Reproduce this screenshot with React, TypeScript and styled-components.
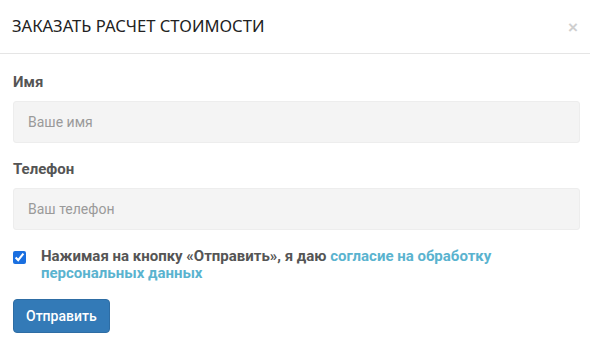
import styled, { createGlobalStyle } from 'styled-components'

const GlobalStyle = createGlobalStyle`
  html, body {
    margin: 0;
    padding: 0;
    background: #ffffff;
  }
  * {
    box-sizing: border-box;
  }
`

/**
 * Order cost calculation modal
 */
export default function App() {
  return (
    <>
      <GlobalStyle />
      <Modal>
        <Header>
          <Title>Заказать расчет стоимости</Title>
          <Close aria-label="Закрыть">×</Close>
        </Header>
        <Body>
          <Field>
            <Label htmlFor="name">Имя</Label>
            <Input id="name" placeholder="Ваше имя" />
          </Field>
          <Field>
            <Label htmlFor="phone">Телефон</Label>
            <Input id="phone" placeholder="Ваш телефон" />
          </Field>
          <Agree>
            <Checkbox type="checkbox" defaultChecked />
            <AgreeText>
              Нажимая на кнопку «Отправить», я даю{' '}
              <AgreeLink href="#">согласие на обработку персональных данных</AgreeLink>
            </AgreeText>
          </Agree>
          <Submit type="button">Отправить</Submit>
        </Body>
      </Modal>
    </>
  )
}

// Styled components
const Modal = styled.div`
  width: 590px;
  height: 342px;
  background: #ffffff;
  display: flex;
  flex-direction: column;
`

const Header = styled.div`
  height: 54px;
  padding: 0 12px 0 12px;
  display: flex;
  align-items: center;
  justify-content: space-between;
  border-bottom: 1px solid #e5e5e5;
`

const Title = styled.h4`
  margin: 0;
  font-family: 'Noto Sans', sans-serif;
  font-size: 16.6px;
  font-weight: 400;
  text-transform: uppercase;
  color: #222222;
  padding-bottom: 2px;
`

const Close = styled.button`
  border: 0;
  background: none;
  padding: 0;
  font-family: 'Liberation Sans', sans-serif;
  font-size: 17px;
  font-weight: 700;
  color: #cfcfcf;
  line-height: 1;
  cursor: pointer;
  margin-top: 2px;
`

const Body = styled.div`
  padding: 19px 10px 0 13px;
  display: flex;
  flex-direction: column;
`

const Field = styled.div`
  display: flex;
  flex-direction: column;
  gap: 10px;
  margin-bottom: 17px;
`

const Label = styled.label`
  font-family: Roboto, sans-serif;
  font-size: 15px;
  font-weight: 700;
  color: #555555;
  line-height: 18px;
`

const Input = styled.input`
  width: 567px;
  height: 42px;
  padding: 0 14px;
  background: #f4f4f4;
  border: 1px solid #ededed;
  border-radius: 3px;
  font-family: Roboto, sans-serif;
  font-size: 14px;
  color: #555555;
  outline: none;

  &::placeholder {
    color: #9a9a9a;
  }
`

const Agree = styled.label`
  display: flex;
  align-items: flex-start;
  gap: 15px;
  margin-top: 1px;
  margin-bottom: 17px;
`

const Checkbox = styled.input`
  width: 13px;
  height: 13px;
  margin: 3px 0 0 0;
  accent-color: #1a6fe0;
  flex-shrink: 0;
`

const AgreeText = styled.span`
  font-family: Roboto, sans-serif;
  font-size: 15px;
  font-weight: 700;
  line-height: 17px;
  color: #555555;
  max-width: 470px;
`

const AgreeLink = styled.a`
  color: #5ab3cf;
  text-decoration: none;
`

const Submit = styled.button`
  align-self: flex-start;
  height: 34px;
  padding: 0 12px;
  background: #337ab7;
  border: 1px solid #2e6da4;
  border-radius: 4px;
  font-family: Roboto, sans-serif;
  font-size: 14px;
  font-weight: 500;
  color: #ffffff;
  cursor: pointer;
`
